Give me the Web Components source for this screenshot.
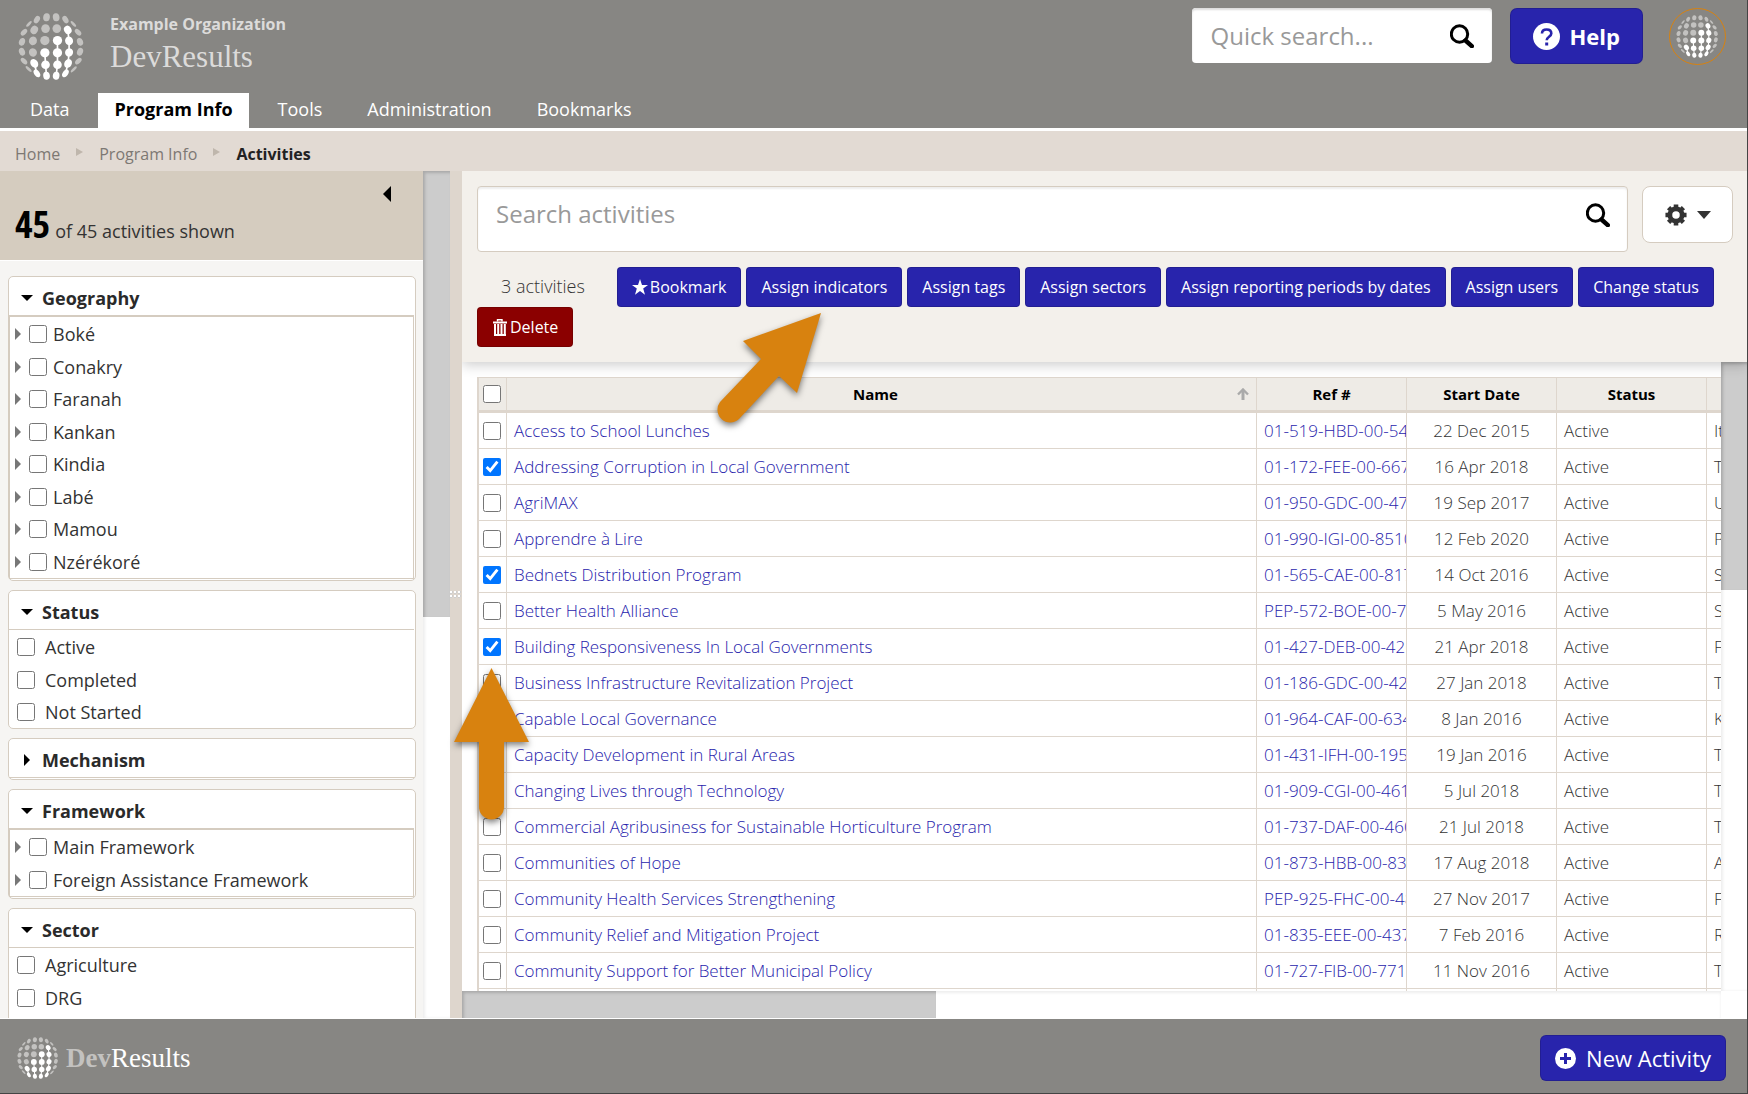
<!DOCTYPE html>
<html lang="en">
<head>
<meta charset="utf-8">
<title>Activities - DevResults</title>
<style>
	html, body {
		height: 100%;
		margin: 0;
	}
	body {
		font-family: "Open Sans", "Noto Sans", sans-serif;
		font-size: 17px;
		color: #333;
		background: #fff;
		overflow: hidden;
		--bar: #878683;
		--blue: #2824ac;
		--line: #d5ccc0;
	}
</style>
</head>
<body>
<dr-app>
	<dr-header slot="header"></dr-header>
	<dr-breadcrumb slot="header"></dr-breadcrumb>
	<dr-sidebar slot="side">
		<dr-filter heading="Geography" kind="tree" items="Boké|Conakry|Faranah|Kankan|Kindia|Labé|Mamou|Nzérékoré"></dr-filter>
		<dr-filter heading="Status" kind="list" items="Active|Completed|Not Started"></dr-filter>
		<dr-filter heading="Mechanism" kind="closed" items=""></dr-filter>
		<dr-filter heading="Framework" kind="tree" items="Main Framework|Foreign Assistance Framework"></dr-filter>
		<dr-filter heading="Sector" kind="list" items="Agriculture|DRG"></dr-filter>
	</dr-sidebar>
	<dr-toolbar slot="main"></dr-toolbar>
	<dr-grid slot="main"></dr-grid>
	<dr-footer slot="footer"></dr-footer>
</dr-app>
<dr-arrows></dr-arrows>

<script>
const define = (name, html, setup) => {
	const template = document.createElement('template');
	template.innerHTML = html;
	customElements.define(name, class extends HTMLElement {
		constructor() {
			super();
			this.attachShadow({ mode: 'open' }).appendChild(template.content.cloneNode(true));
		}

		connectedCallback() {
			if (setup) setup(this, this.shadowRoot);
		}
	});
};

// shared pieces of icon markup
const searchIcon = `<svg width="24" height="24" viewBox="0 0 24 24" fill="none" stroke="#000"><circle cx="9.5" cy="10" r="8.2" stroke-width="3"/><path d="M15.5 16.5L21.8 22.2" stroke-width="4.4" stroke-linecap="round"/></svg>`;

// Globe made of dots: [cx, cy, rx, ry, rotation, lit]
const dots = [
	[88, 71, 4, 11, 45, 0], [112, 58, 8, 12, 32, 0], [141, 51, 10, 12, 8, 0], [170, 51, 10, 12, -8, 0], [198, 58, 8, 12, -32, 0], [222, 71, 4, 11, -45, 0],
	[73, 96, 7, 12, 45, 0], [104, 89, 11, 13, 30, 0], [138, 85, 13, 13, 0, 0], [172, 85, 13, 13, 0, 0], [205, 89, 11, 13, -30, 1], [236, 96, 7, 12, -45, 0],
	[67, 125, 9, 12, 20, 0], [100, 122, 12, 13, 20, 0], [136, 121, 14, 14, 0, 0], [174, 121, 14, 14, 0, 1], [209, 122, 12, 13, -20, 1], [242, 125, 9, 12, -20, 0],
	[67, 155, 9, 12, -20, 0], [100, 157, 12, 13, -20, 0], [136, 158, 14, 14, 0, 1], [174, 158, 14, 14, 0, 1], [209, 157, 12, 13, 20, 1], [242, 155, 9, 12, 20, 0],
	[73, 183, 7, 12, -45, 0], [104, 190, 11, 14, -35, 1], [138, 194, 13, 13, 0, 1], [174, 194, 13, 13, 0, 1], [206, 190, 11, 14, 30, 1], [237, 183, 7, 12, 45, 0],
	[87, 207, 4, 12, -45, 0], [112, 220, 8, 13, -35, 1], [141, 227, 10, 12, -8, 1], [170, 227, 10, 12, 8, 1], [198, 220, 8, 13, 35, 1], [223, 208, 4, 12, 45, 0],
];

define('dr-globe', `
<style>
	:host { display: block; flex: none; width: 67px; height: 67px; }
	svg { display: block; width: 100%; height: 100%; }
</style>
<svg viewBox="56 38 200 202"></svg>`, (el, root) => {
	root.querySelector('svg').innerHTML =
		'<path d="M205 89L209 122V157L206 190L198 220M174 121V194L170 227M136 158L138 194L141 227M104 190L112 220" fill="none" stroke="#fff" stroke-width="5"/>' +
		dots.map(([x, y, rx, ry, turn, lit]) =>
			`<ellipse cx="${x}" cy="${y}" rx="${rx}" ry="${ry}" transform="rotate(${turn} ${x} ${y})" fill="${lit ? '#fff' : '#c3c2c0'}"/>`).join('');
});

define('dr-button', `
<style>
	:host { display: inline-flex; flex: none; }
	button {
		display: flex;
		align-items: center;
		gap: var(--gap, 2px);
		height: var(--height, 40px);
		padding: 0 var(--pad, 14px);
		box-sizing: border-box;
		border: 1px solid rgba(0, 0, 0, .15);
		border-radius: var(--radius, 4px);
		background: var(--fill, #2824ac);
		color: #fff;
		font: inherit;
		white-space: nowrap;
	}
</style>
<button type="button"><slot name="icon"></slot><slot></slot></button>`);

define('dr-app', `
<style>
	:host {
		display: flex;
		flex-direction: column;
		height: 100vh;
		box-sizing: border-box;
		border-right: 1px solid #444;
		border-bottom: 1px solid #444;
	}
	.body { display: flex; flex: 1; min-height: 0; border-bottom: 1px solid #fff; }
	.splitter {
		flex: none;
		display: flex;
		align-items: center;
		width: 12px;
		background: #ded6cd;
	}
	.grip {
		width: 12px;
		height: 8px;
		background: radial-gradient(circle at 1px 1px, #fff 1px, #aaa 2px, transparent 2px) 0 0 / 4px 4px;
	}
	main { display: flex; flex-direction: column; flex: 1; min-width: 0; }
</style>
<slot name="header"></slot>
<div class="body">
	<slot name="side"></slot>
	<div class="splitter"><div class="grip"></div></div>
	<main><slot name="main"></slot></main>
</div>
<slot name="footer"></slot>`);

define('dr-header', `
<style>
	:host { display: block; flex: none; background: var(--bar); border-bottom: 3px solid #fff; }
	.top { display: flex; align-items: flex-start; height: 93px; padding: 0 21px 0 18px; box-sizing: border-box; }
	.top > dr-globe { margin-top: 13px; }
	.names { flex: 1; padding: 12px 0 0 25px; color: #dcdbda; }
	.org { font-size: 16px; line-height: 24px; font-weight: 700; }
	.site { font-family: "Roboto Slab", "Liberation Serif", serif; font-size: 31px; line-height: 42px; font-weight: 300; }
	.right { display: flex; padding-top: 8px; }
	label {
		display: flex;
		align-items: center;
		width: 300px;
		height: 55px;
		box-sizing: border-box;
		padding: 0 18px 0 19px;
		border-radius: 4px;
		background: #fff;
		box-shadow: inset 0 2px 2px #ddd;
	}
	input {
		flex: 1;
		min-width: 0;
		padding: 0;
		border: 0;
		outline: 0;
		background: none;
		font: inherit;
		font-size: 24px;
	}
	input::placeholder { color: #999; opacity: 1; }
	dr-button {
		--height: 56px;
		--pad: 22px;
		--gap: 10px;
		--radius: 7px;
		margin-left: 18px;
		font-size: 22px;
		font-weight: 700;
	}
	.avatar {
		display: flex;
		align-items: center;
		justify-content: center;
		width: 55px;
		height: 55px;
		margin-left: 26px;
		border: 1px solid #d8820f;
		border-radius: 50%;
	}
	.avatar dr-globe { width: 43px; height: 43px; }
	nav { display: flex; gap: 13px; padding-left: 14px; font-size: 18px; line-height: 33px; }
	nav a { padding: 0 16px 2px; color: #fff; text-decoration: none; }
	nav a.on { background: #fff; color: #000; font-weight: 700; }
</style>
<div class="top">
	<dr-globe></dr-globe>
	<div class="names">
		<div class="org">Example Organization</div>
		<div class="site">DevResults</div>
	</div>
	<div class="right">
		<label><input type="text" placeholder="Quick search..." aria-label="Quick search">${searchIcon}</label>
		<dr-button>
			<svg slot="icon" width="27" height="27" viewBox="0 0 27 27"><circle cx="13.5" cy="13.5" r="13.5" fill="#fff"/><path d="M9 10.5C9 7.8 11 6.5 13.6 6.5c2.700 0 4.700 1.500 4.700 3.900 0 3.200-4.600 3.400-4.600 6.800" fill="none" stroke="#2824ac" stroke-width="2.600"/><rect x="12.200" y="19.500" width="3" height="3" fill="#2824ac"/></svg>
			Help
		</dr-button>
		<div class="avatar"><dr-globe></dr-globe></div>
	</div>
</div>
<nav>
	<a href="#data">Data</a>
	<a href="#program" class="on">Program Info</a>
	<a href="#tools">Tools</a>
	<a href="#admin">Administration</a>
	<a href="#bookmarks">Bookmarks</a>
</nav>`);

define('dr-breadcrumb', `
<style>
	:host { display: block; flex: none; background: #e2dad3; }
	nav { display: flex; align-items: center; gap: 16px; height: 40px; padding: 5px 15px 0; box-sizing: border-box; font-size: 16px; }
	a { color: #7d7873; text-decoration: none; }
	b { color: #222; }
	i { margin-bottom: 3px; border: 4px solid transparent; border-left: 7px solid #bfb6ac; border-right: 0; }
</style>
<nav>
	<a href="#home">Home</a><i></i><a href="#program">Program Info</a><i></i><b>Activities</b>
</nav>`);

define('dr-sidebar', `
<style>
	:host { display: flex; flex: none; width: 450px; min-height: 0; }
	.pane { display: flex; flex-direction: column; flex: 1; overflow: hidden; background: #f6f5f3; }
	.count {
		display: flex;
		flex: none;
		justify-content: space-between;
		height: 90px;
		padding: 0 32px 0 15px;
		box-sizing: border-box;
		border-bottom: 1px solid #fff;
		background: #d5ccbf;
	}
	.count p { display: flex; align-items: baseline; gap: 5px; margin: 0; align-self: flex-end; font-size: 18px; line-height: 58px; }
	.count b { font-family: "Open Sans Condensed", "Roboto Condensed", sans-serif; font-size: 38px; font-weight: 300; color: #000; }
	.count button { align-self: flex-start; margin-top: 15px; padding: 0; border: 8px solid transparent; border-right-color: #000; border-left: 0; background: none; }
	.filters { display: flex; flex-direction: column; flex: 1; gap: 9px; padding: 15px 7px 0 8px; }
	.filters ::slotted(:last-child) { flex: 1; margin-bottom: -8px; }
	.track { width: 27px; background: #fff; box-shadow: inset 2px 0 3px #eee; }
	.thumb { height: 52.7%; background: #ccc; box-shadow: inset 2px 2px 3px #aaa; }
</style>
<div class="pane">
	<div class="count">
		<p><b>45</b> of 45 activities shown</p>
		<button type="button" aria-label="Collapse filters"></button>
	</div>
	<div class="filters"><slot></slot></div>
</div>
<div class="track"><div class="thumb"></div></div>`);

define('dr-filter', `
<style>
	:host { display: block; border: 1px solid var(--line); border-radius: 5px; background: #fff; }
	button {
		display: flex;
		align-items: center;
		width: 100%;
		height: 38px;
		padding: 3px 12px 0;
		box-sizing: border-box;
		border: 0;
		background: none;
		color: #2a2a2a;
		font: inherit;
		font-size: 18px;
		font-weight: 700;
	}
	button svg { margin-right: 9px; }
	ul { margin: 0 1px 0 0; padding: 1px 0 0; border-top: 1px solid var(--line); list-style: none; }
	:host([kind="tree"]) ul { margin: 0 1px 1px 0; border: 1px solid var(--line); border-top-width: 2px; }
	:host([kind="closed"]) ul { margin-bottom: 1px; padding: 0; border-top: 0; border-bottom: 1px solid var(--line); }
	li { display: flex; align-items: center; height: 32px; padding-left: 8px; font-size: 18px; }
	li:nth-child(even) { height: 33px; }
	label { display: flex; align-items: center; gap: 10px; }
	:host([kind="tree"]) li { padding-left: 5px; }
	:host([kind="tree"]) label { gap: 6px; }
	input { width: 18px; height: 18px; margin: 0; }
	li i { margin-right: 8px; border: 6px solid transparent; border-left-color: #777; border-right: 0; }
</style>
<button type="button"></button>
<ul></ul>`, (el, root) => {
	const kind = el.getAttribute('kind');
	const tree = kind === 'tree';
	const items = el.getAttribute('items').split('|').filter(Boolean);
	const mark = kind === 'closed' ? 'M3 0L9 6L3 12Z' : 'M0 3H12L6 9Z';
	root.querySelector('button').innerHTML =
		`<svg width="12" height="12" viewBox="0 0 12 12"><path d="${mark}"/></svg>${el.getAttribute('heading')}`;
	root.querySelector('ul').innerHTML = items.map((item) =>
		`<li>${tree ? '<i></i>' : ''}<label><input type="checkbox">${item}</label></li>`).join('');
});

define('dr-toolbar', `
<style>
	:host {
		display: block;
		flex: none;
		position: relative;
		z-index: 1;
		padding: 15px 14px 15px 15px;
		background: #f3f0eb;
		box-shadow: 0 3px 12px rgba(0, 0, 0, .2);
		clip-path: inset(0 0 -20px 0);
	}
	.search { display: flex; align-items: flex-start; gap: 14px; margin-bottom: 15px; }
	label {
		display: flex;
		align-items: center;
		flex: 1;
		height: 66px;
		box-sizing: border-box;
		padding: 0 17px 8px 18px;
		border: 1px solid var(--line);
		border-radius: 4px;
		background: #fff;
		box-shadow: inset 0 2px 2px #eee;
	}
	input { flex: 1; padding: 0 0 4px; border: 0; outline: 0; background: none; font: inherit; font-size: 24px; }
	input::placeholder { color: #999; opacity: 1; }
	.gear {
		display: flex;
		align-items: center;
		justify-content: center;
		gap: 10px;
		width: 91px;
		height: 57px;
		padding: 0;
		border: 1px solid var(--line);
		border-radius: 8px;
		background: #fff;
	}
	.actions { display: flex; flex-wrap: wrap; align-items: center; gap: 0 5px; font-size: 16px; }
	.picked { padding: 0 27px 2px 24px; font-size: 18px; font-weight: 300; }
	.delete { --fill: #8b0000; }
</style>
<div class="search">
	<label><input type="text" placeholder="Search activities" aria-label="Search activities">${searchIcon}</label>
	<button type="button" class="gear" aria-label="Settings">
		<svg width="22" height="24" viewBox="-12 -12 24 24"><circle r="6.700" fill="none" stroke="#333" stroke-width="5.200"/><g stroke="#333" stroke-width="5"><path d="M0 -11.500V-8M0 11.500V8M-11.500 0H-8M11.500 0H8M-8.100 -8.100L-6 -6M8.100 8.100L6 6M-8.100 8.100L-6 6M8.100 -8.100L6 -6"/></g></svg>
		<svg width="14" height="8" viewBox="0 0 14 8"><path d="M0 0H14L7 8Z" fill="#333"/></svg>
	</button>
</div>
<div class="actions">
	<span class="picked">3 activities</span>
	<dr-button><svg slot="icon" width="16" height="16" viewBox="0 0 16 16" fill="#fff"><path d="M8 0L10 6H16L11.200 9.600L13 15.800L8 12L3 15.800L4.800 9.600L0 6H6Z"/></svg>Bookmark</dr-button>
	<dr-button>Assign indicators</dr-button>
	<dr-button>Assign tags</dr-button>
	<dr-button>Assign sectors</dr-button>
	<dr-button>Assign reporting periods by dates</dr-button>
	<dr-button>Assign users</dr-button>
	<dr-button>Change status</dr-button>
	<dr-button class="delete"><svg slot="icon" width="16" height="17" viewBox="0 0 16 17" fill="none" stroke="#fff"><path d="M5.500 2.500V.700H10V2.500" stroke-width="1.400"/><path d="M1 3.500H15" stroke-width="2"/><path d="M3 5V16M6.200 5V16M9.500 5V16M12.800 5V16" stroke-width="2"/><path d="M2 16H14" stroke-width="2"/></svg>Delete</dr-button>
</div>`);

const activities = [
	['Access to School Lunches', '01-519-HBD-00-54', '22 Dec 2015', 'It'],
	['Addressing Corruption in Local Government', '01-172-FEE-00-667', '16 Apr 2018', 'T', true],
	['AgriMAX', '01-950-GDC-00-47', '19 Sep 2017', 'U'],
	['Apprendre à Lire', '01-990-IGI-00-8510', '12 Feb 2020', 'P'],
	['Bednets Distribution Program', '01-565-CAE-00-817', '14 Oct 2016', 'S', true],
	['Better Health Alliance', 'PEP-572-BOE-00-74', '5 May 2016', 'S'],
	['Building Responsiveness In Local Governments', '01-427-DEB-00-426', '21 Apr 2018', 'F', true],
	['Business Infrastructure Revitalization Project', '01-186-GDC-00-42', '27 Jan 2018', 'T'],
	['Capable Local Governance', '01-964-CAF-00-634', '8 Jan 2016', 'K'],
	['Capacity Development in Rural Areas', '01-431-IFH-00-195', '19 Jan 2016', 'T'],
	['Changing Lives through Technology', '01-909-CGI-00-461', '5 Jul 2018', 'T'],
	['Commercial Agribusiness for Sustainable Horticulture Program', '01-737-DAF-00-460', '21 Jul 2018', 'T'],
	['Communities of Hope', '01-873-HBB-00-837', '17 Aug 2018', 'A'],
	['Community Health Services Strengthening', 'PEP-925-FHC-00-48', '27 Nov 2017', 'F'],
	['Community Relief and Mitigation Project', '01-835-EEE-00-437', '7 Feb 2016', 'R'],
	['Community Support for Better Municipal Policy', '01-727-FIB-00-7717', '11 Nov 2016', 'T'],
];

define('dr-grid', `
<style>
	:host { display: grid; grid-template: 1fr 27px / 1fr 26px; flex: 1; min-height: 0; }
	.view { overflow: hidden; padding: 15px 0 0 15px; }
	table { width: 1500px; table-layout: fixed; border-collapse: separate; border-spacing: 0; border-left: 2px solid #ded6cd; }
	.check { width: 28px; }
	.name { width: 750px; }
	.mid { width: 150px; }
	th, td { box-sizing: border-box; padding: 0 7px; border: 0 solid #ded6cd; border-width: 0 1px 1px 0; overflow: hidden; white-space: nowrap; text-align: left; }
	th { height: 36px; border-top-width: 1px; border-bottom-width: 3px; background: #eeebe6; color: #000; font-size: 15px; text-align: center; }
	td { height: 36px; font-size: 17px; font-weight: 300; }
	th:first-child, td:first-child { padding: 0 1px 0 0; text-align: center; }
	td:nth-child(3) { padding-right: 0; }
	td:nth-child(4) { text-align: center; }
	input { display: block; width: 18px; height: 18px; margin: 0 auto; }
	a { color: var(--blue); text-decoration: none; }
	.sort { display: flex; align-items: center; }
	.sort span { flex: 1; }
	.v { background: #fff; box-shadow: inset 2px 0 3px #eee; }
	.v div { height: 36.3%; background: #ccc; box-shadow: inset 2px 2px 3px #aaa; }
	.h { background: #fff; box-shadow: inset 0 2px 3px #eee; }
	.h div { width: 474px; height: 100%; background: #ccc; box-shadow: inset 2px 2px 3px #aaa; }
</style>
<div class="view">
	<table>
		<colgroup><col class="check"><col class="name"><col class="mid"><col class="mid"><col class="mid"><col></colgroup>
		<thead><tr>
			<th><input type="checkbox" aria-label="Select all"></th>
			<th><div class="sort"><span>Name</span><svg width="12" height="12" viewBox="0 0 12 12" fill="none" stroke="#aaa"><path d="M1 6.500L6 1.500L11 6.500" stroke-width="2.400"/><path d="M6 2V12" stroke-width="3"/></svg></div></th>
			<th>Ref #</th><th>Start Date</th><th>Status</th><th></th>
		</tr></thead>
		<tbody></tbody>
	</table>
</div>
<div class="v"><div></div></div>
<div class="h"><div></div></div>`, (el, root) => {
	const row = ([name, ref, date, text, picked]) => `<tr>
		<td><input type="checkbox" aria-label="Select ${name}"${picked ? ' checked' : ''}></td>
		<td><a href="#activity">${name}</a></td><td><a href="#activity">${ref}</a></td>
		<td>${date}</td><td>Active</td><td>${text}</td>
	</tr>`;
	root.querySelector('tbody').innerHTML = activities.map(row).join('') +
		'<tr><td></td><td></td><td></td><td></td><td></td><td></td></tr>';
});

define('dr-footer', `
<style>
	:host {
		display: flex;
		align-items: center;
		justify-content: space-between;
		flex: none;
		height: 74px;
		padding: 4px 21px 0 17px;
		box-sizing: border-box;
		background: var(--bar);
	}
	.brand { display: flex; align-items: center; gap: 7px; color: #fff; font-family: "Roboto Slab", "Liberation Serif", serif; font-size: 27px; }
	.brand b { color: #c3c2c0; }
	dr-globe { width: 42px; height: 42px; }
	dr-button { --height: 46px; --pad: 14px; --gap: 10px; --radius: 6px; font-size: 22px; }
</style>
<div class="brand"><dr-globe></dr-globe><span><b>Dev</b>Results</span></div>
<dr-button><svg slot="icon" width="21" height="21" viewBox="0 0 21 21"><circle cx="10.500" cy="10.500" r="10.500" fill="#fff"/><path d="M10.500 5V16M5 10.500H16" stroke="#2824ac" stroke-width="3"/></svg>New Activity</dr-button>`);

// Callout arrows drawn over the page
define('dr-arrows', `
<style>
	:host { position: absolute; top: 0; left: 0; z-index: 5; pointer-events: none; }
	svg { display: block; filter: drop-shadow(0 3px 3px rgba(0, 0, 0, .5)); }
</style>
<svg width="860" height="860" viewBox="0 0 860 860" fill="#d8820f">
	<path d="M821 313L797 393L779 376L739 419A12.800 12.800 0 0 1 720 402L761 359L743 341Z"/>
	<path d="M491.500 668L529 742H504V807A12.500 12.500 0 0 1 479 807V742H454Z"/>
</svg>`);
</script>
</body>
</html>
